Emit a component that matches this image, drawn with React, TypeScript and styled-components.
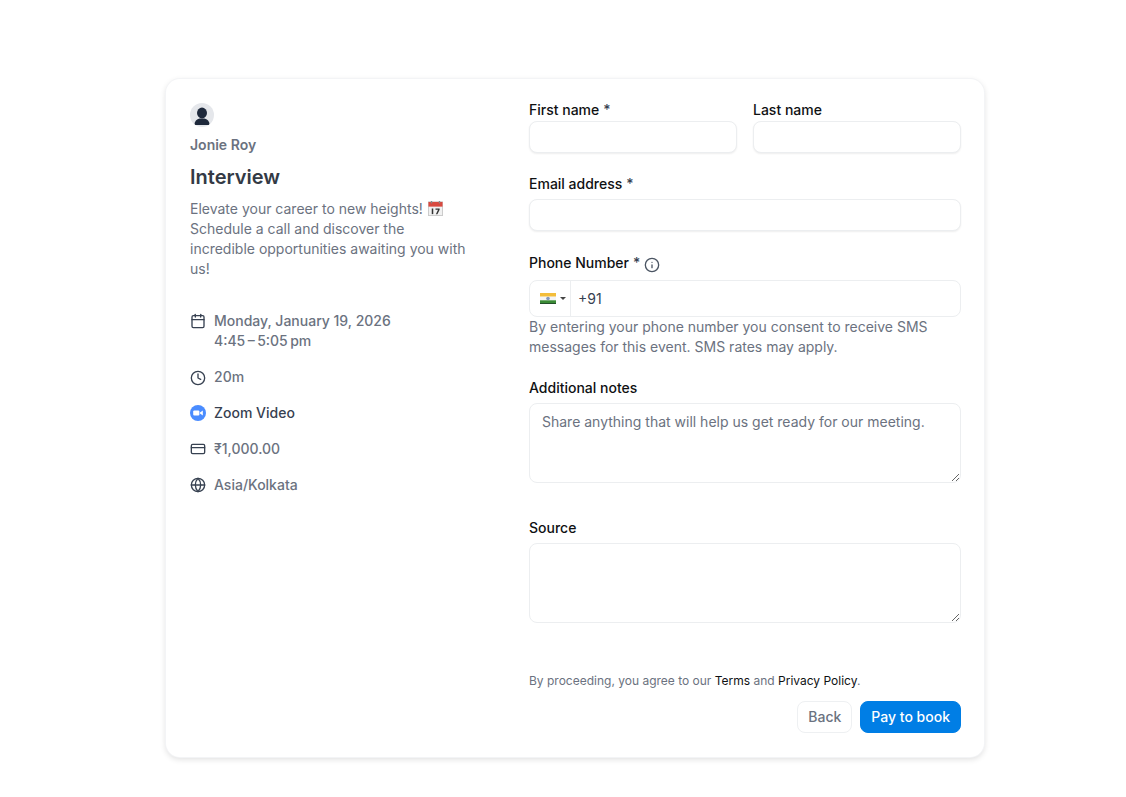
import * as React from 'react';
import styled, { createGlobalStyle } from 'styled-components';
import { Calendar, Clock, CreditCard, Globe, Info } from 'lucide-react';

const GlobalStyle = createGlobalStyle`
  html, body {
    margin: 0;
    padding: 0;
    background: #fff;
  }
  body {
    font-family: Inter, "Liberation Sans", sans-serif;
    font-size: 14px;
    line-height: 20px;
    color: #0f1113;
  }
  * {
    box-sizing: border-box;
  }
`;

const Page = styled.main`
  padding: 79px 0 40px 166px;
`;

const Card = styled.div`
  width: 818px;
  height: 678px;
  display: grid;
  grid-template-columns: 339px 479px;
  background: #fff;
  border-radius: 14px;
  box-shadow: 0 0 0 1px #f3f4f6, 0 2px 6px rgba(0, 0, 0, 0.14);
`;

const Summary = styled.aside`
  padding: 24px 24px 0 24px;
`;

const AvatarCircle = styled.div`
  width: 24px;
  height: 24px;
  border-radius: 50%;
  background: #e5e7eb;
  overflow: hidden;
`;

const Host = styled.p`
  margin: 8px 0 0;
  font-weight: 600;
  color: #6b7280;
`;

const Title = styled.h1`
  margin: 8px 0 0;
  font-size: 20px;
  line-height: 28px;
  font-weight: 600;
  color: #333a45;
`;

const Description = styled.p`
  margin: 8px 0 0;
  max-width: 280px;
  color: #6b7280;
`;

const CalendarEmoji = styled.svg`
  display: inline-block;
  width: 15px;
  height: 15px;
  margin-left: 1px;
  vertical-align: -2px;
`;

const Details = styled.ul`
  list-style: none;
  margin: 32px 0 0;
  padding: 0;
  display: flex;
  flex-direction: column;
  gap: 16px;
`;

const Detail = styled.li<{ $strong?: boolean }>`
  display: flex;
  gap: 8px;
  font-weight: 500;
  color: ${(p) => (p.$strong ? '#374151' : '#6b7280')};

  svg {
    flex: none;
    margin-top: 2px;
    color: #374151;
  }
`;

const ClockIcon = styled(Clock)`
  && {
    margin-top: 3px;
  }
`;

const Form = styled.form`
  padding: 21px 23px 0 24px;
  display: flex;
  flex-direction: column;
`;

const NameRow = styled.div`
  display: grid;
  grid-template-columns: 208px 208px;
  gap: 16px;
`;

const Field = styled.div<{ $top?: number }>`
  margin-top: ${(p) => p.$top ?? 0}px;
`;

const Label = styled.label<{ $gap?: number }>`
  display: flex;
  align-items: center;
  height: 20px;
  margin-bottom: ${(p) => p.$gap ?? 1}px;
  font-weight: 500;
  color: #0f1113;

  svg {
    margin: 3px 0 0 4px;
    color: #4b5563;
  }
`;

const Required = styled.span`
  margin-left: 4px;
  color: #374151;
  font-size: 14px;
`;

const TextInput = styled.input<{ $height?: number }>`
  display: block;
  width: 100%;
  height: ${(p) => p.$height ?? 32}px;
  padding: 0 12px;
  border: 1px solid #eceef0;
  border-radius: 8px;
  background: #fff;
  box-shadow: 0 1px 2px rgba(0, 0, 0, 0.07);
  font: inherit;
  outline: none;
`;

const PhoneBox = styled.div`
  display: flex;
  height: 37px;
  border: 1px solid #eceef0;
  border-radius: 8px;
  background: #fff;
`;

const FlagButton = styled.div`
  width: 41px;
  flex: none;
  display: flex;
  align-items: center;
  padding-left: 10px;
  gap: 4px;
  border-right: 1px solid #eceef0;
`;

const Caret = styled.span`
  width: 0;
  height: 0;
  border-left: 3px solid transparent;
  border-right: 3px solid transparent;
  border-top: 3px solid #444;
`;

const PhoneInput = styled.input`
  flex: 1;
  min-width: 0;
  border: 0;
  outline: none;
  background: transparent;
  padding: 0 7px;
  font: inherit;
  color: #374151;
`;

const Hint = styled.p`
  margin: 0;
  color: #6b7280;
`;

const TextArea = styled.textarea`
  display: block;
  width: 100%;
  height: 80px;
  padding: 8px 12px;
  border: 1px solid #eceef0;
  border-radius: 8px;
  background: #fff;
  font: inherit;
  outline: none;

  &::placeholder {
    color: #6b7280;
    opacity: 1;
  }
`;

const Terms = styled.p`
  margin: 50px 0 0;
  font-size: 12px;
  line-height: 16px;
  color: #6b7280;

  a {
    color: #0f1113;
    text-decoration: none;
  }
`;

const Actions = styled.div`
  margin-top: 12px;
  display: flex;
  justify-content: flex-end;
  gap: 8px;
`;

const Button = styled.button<{ $primary?: boolean }>`
  height: 32px;
  padding: 0 10px;
  border-radius: 8px;
  border: 1px solid ${(p) => (p.$primary ? '#007ee5' : '#eef0f2')};
  background: ${(p) => (p.$primary ? '#007ee5' : '#fff')};
  color: ${(p) => (p.$primary ? '#fff' : '#6b7280')};
  font: inherit;
  font-weight: 500;
`;

const Avatar = () => (
  <AvatarCircle>
    <svg width="24" height="24" viewBox="0 0 24 24" aria-hidden="true">
      <ellipse cx="12" cy="10" rx="5" ry="5.4" fill="#1e293b" />
      <path d="M4.5 21.2c0-3 2.2-4.8 5-5.7h5c2.8.9 5 2.7 5 5.7 0 .5-.3.8-.8.8H5.300c-.5 0-.8-.3-.8-.8z" fill="#1e293b" />
    </svg>
  </AvatarCircle>
);

const ZoomIcon = () => (
  <svg width="16" height="16" viewBox="0 0 16 16" aria-hidden="true">
    <circle cx="8" cy="8" r="8" fill="#4a8cff" />
    <rect x="3.2" y="5.4" width="6.2" height="5.2" rx="1.1" fill="#fff" />
    <path d="M10 7.4l2.8-1.9v5l-2.8-1.9z" fill="#fff" />
  </svg>
);

const Emoji = () => (
  <CalendarEmoji viewBox="0 0 16 16" aria-hidden="true">
    <rect x="0.5" y="1" width="15" height="14.5" fill="#f1f1f1" stroke="#c9c9c9" />
    <rect x="0.5" y="1" width="15" height="5" fill="#d9493f" />
    <rect x="3" y="0" width="1.5" height="2.5" fill="#888" />
    <rect x="11.5" y="0" width="1.5" height="2.5" fill="#888" />
    <rect x="4" y="8" width="1.6" height="6" fill="#333" />
    <path d="M8 8h4.4v1.2L10 14H8.4l2.3-4.7H8z" fill="#333" />
  </CalendarEmoji>
);

const IndiaFlag = () => (
  <svg width="16" height="11" viewBox="0 0 16 11" aria-hidden="true">
    <rect width="16" height="3.7" fill="#f3bd3a" />
    <rect y="3.7" width="16" height="3.6" fill="#f4f4f4" />
    <rect y="7.3" width="16" height="3.7" fill="#3a8a35" />
    <rect y="10" width="16" height="1" fill="#24502a" />
    <circle cx="8" cy="5.5" r="1.8" fill="#8298bd" />
  </svg>
);

export default function App() {
  return (
    <Page>
      <GlobalStyle />
      <Card>
        <Summary>
          <Avatar />
          <Host>Jonie Roy</Host>
          <Title>Interview</Title>
          <Description>
            Elevate your career to new heights! <Emoji /> Schedule a call and discover the
            incredible opportunities awaiting you with us!
          </Description>
          <Details>
            <Detail>
              <Calendar size={16} />
              <div>
                Monday, January 19, 2026
                <br />
                4:45{'\u2009–\u2009'}5:05{'\u2009'}pm
              </div>
            </Detail>
            <Detail>
              <ClockIcon size={16} />
              20m
            </Detail>
            <Detail $strong>
              <ZoomIcon />
              Zoom Video
            </Detail>
            <Detail>
              <CreditCard size={16} />
              ₹1,000.00
            </Detail>
            <Detail>
              <Globe size={16} />
              Asia/Kolkata
            </Detail>
          </Details>
        </Summary>
        <Form>
          <NameRow>
            <Field>
              <Label>
                First name<Required>*</Required>
              </Label>
              <TextInput />
            </Field>
            <Field>
              <Label>Last name</Label>
              <TextInput />
            </Field>
          </NameRow>
          <Field $top={21}>
            <Label $gap={5}>
              Email address<Required>*</Required>
            </Label>
            <TextInput />
          </Field>
          <Field $top={22}>
            <Label $gap={7}>
              Phone Number<Required>*</Required>
              <Info size={16} />
            </Label>
            <PhoneBox>
              <FlagButton>
                <IndiaFlag />
                <Caret />
              </FlagButton>
              <PhoneInput defaultValue="+91" />
            </PhoneBox>
            <Hint>
              By entering your phone number you consent to receive SMS messages for this event.
              SMS rates may apply.
            </Hint>
          </Field>
          <Field $top={21}>
            <Label $gap={5}>Additional notes</Label>
            <TextArea placeholder="Share anything that will help us get ready for our meeting." />
          </Field>
          <Field $top={35}>
            <Label $gap={5}>Source</Label>
            <TextArea />
          </Field>
          <Terms>
            By proceeding, you agree to our <a>Terms</a> and <a>Privacy Policy</a>.
          </Terms>
          <Actions>
            <Button type="button">Back</Button>
            <Button type="button" $primary>
              Pay to book
            </Button>
          </Actions>
        </Form>
      </Card>
    </Page>
  );
}
